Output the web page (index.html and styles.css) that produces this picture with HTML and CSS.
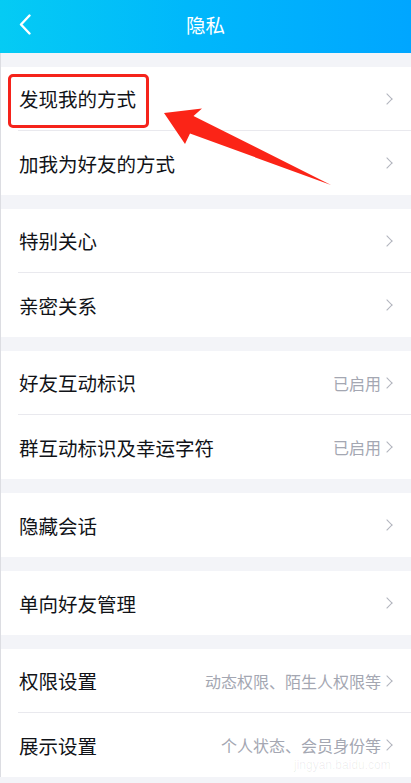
FILE: index.html
```html
<!DOCTYPE html>
<html>
<head>
  <meta charset="utf-8">
  <title>隐私</title>
  <link rel="stylesheet" href="styles.css">
</head>
<body>
  <div class="header">
    <svg class="back" width="12" height="21" viewBox="0 0 12 21">
      <path d="M10.5 1.5 L2 10.5 L10.5 19.5" fill="none" stroke="#fff" stroke-width="2.4" stroke-linecap="round" stroke-linejoin="round"/>
    </svg>
    <h1>隐私</h1>
  </div>

  <div class="list">
    <div class="group">
      <div class="row"><span class="label">发现我的方式</span><span class="chev"></span></div>
      <div class="row"><span class="label">加我为好友的方式</span><span class="chev"></span></div>
    </div>
    <div class="group">
      <div class="row"><span class="label">特别关心</span><span class="chev"></span></div>
      <div class="row"><span class="label">亲密关系</span><span class="chev"></span></div>
    </div>
    <div class="group">
      <div class="row"><span class="label">好友互动标识</span><span class="value">已启用</span><span class="chev"></span></div>
      <div class="row"><span class="label">群互动标识及幸运字符</span><span class="value">已启用</span><span class="chev"></span></div>
    </div>
    <div class="group">
      <div class="row"><span class="label">隐藏会话</span><span class="chev"></span></div>
    </div>
    <div class="group">
      <div class="row"><span class="label">单向好友管理</span><span class="chev"></span></div>
    </div>
    <div class="group">
      <div class="row"><span class="label">权限设置</span><span class="value">动态权限、陌生人权限等</span><span class="chev"></span></div>
      <div class="row"><span class="label">展示设置</span><span class="value">个人状态、会员身份等</span><span class="chev"></span></div>
    </div>
  </div>

  <!-- annotation drawn over the screenshot -->
  <div class="mark"></div>
  <svg class="arrow" width="411" height="200" viewBox="0 0 411 200">
    <path d="M164 113 L202 108.5 L193.5 116 L331 185 L190 133.5 L185 144 Z" fill="#fb2417"/>
  </svg>
  <div class="watermark">jingyan.baidu.com</div>
</body>
</html>
```

FILE: styles.css
```css
body {
  margin: 0;
  background: #f3f4f8;
  font-family: "Noto Sans CJK SC", "Noto Sans", sans-serif;
  color: #111318;
  position: relative;
  }
.header {
  height: 53px;
  display: flex;
  align-items: center;
  justify-content: center;
  position: relative;
  background: linear-gradient(90deg, #05cbf4 0%, #00b8fb 45%, #00a6ff 100%);
  color: #fff;
  }
.header h1 {
  margin: 0 0 5px;
  font-size: 19.5px;
  font-weight: 400;
  }
.back {
  position: absolute;
  left: 19px;
  top: 14px;
  }
.list {
  padding-top: 14px;
  border-left: 1px solid #dcdde2;
  }
.group {
  background: #fff;
  margin-bottom: 14px;
  }
.row {
  box-sizing: border-box;
  height: 64px;
  margin-left: 17px;
  padding-right: 18px;
  display: flex;
  align-items: center;
  }
.row:not(:last-child) {
  border-bottom: 1px solid #e9e9ee;
  }
.label {
  flex: 1;
  padding-left: 1px;
  font-size: 19.5px;
  }
.value {
  font-size: 16px;
  color: #a4a7b2;
  margin-right: 2px;
  }
.chev {
  width: 7px;
  height: 7px;
  border-top: 1.6px solid #b1b4bd;
  border-right: 1.6px solid #b1b4bd;
  transform: rotate(45deg);
  margin-right: 2px;
  }
.mark {
  position: absolute;
  left: 8px;
  top: 74px;
  width: 135px;
  height: 48px;
  border: 3px solid #f5231b;
  border-radius: 5px;
  }
.arrow {
  position: absolute;
  left: 0;
  top: 0;
  }
.watermark {
  position: absolute;
  left: 294px;
  top: 758px;
  font-family: "Liberation Sans", sans-serif;
  font-size: 12px;
  color: rgba(0, 0, 0, 0.07);
  }
```
